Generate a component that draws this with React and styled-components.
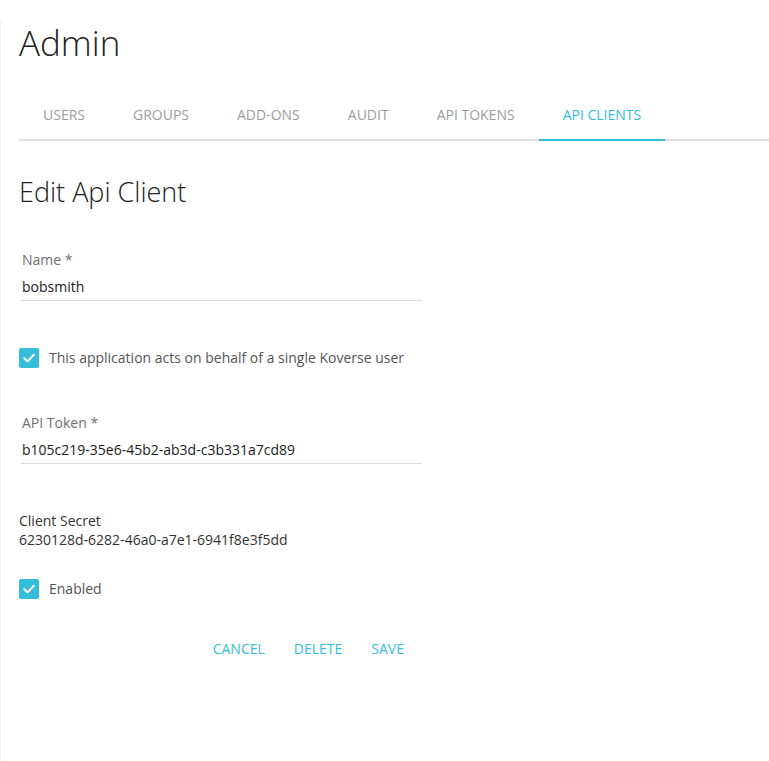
import * as React from 'react'
import styled, { createGlobalStyle } from 'styled-components'

const cyan = '#36bdda'

const GlobalStyle = createGlobalStyle`
  body {
    margin: 0;
    background: #fff;
    font-family: 'Open Sans', 'Liberation Sans', sans-serif;
    color: #212121;
  }
`

const Page = styled.div`
  min-height: 761px;
  box-sizing: border-box;
  border-left: 1px solid #f4f4f4;
  padding-left: 18px;
`

const Title = styled.h1`
  margin: 19px 0 0;
  font-size: 35px;
  font-weight: 300;
  line-height: 48px;
  color: #222;
`

const TabBar = styled.div`
  display: flex;
  margin-top: 24px;
  border-bottom: 2px solid #e0e0e0;
`

const Tab = styled.div`
  height: 47px;
  margin-bottom: -2px;
  padding: 0 24px 1px;
  display: flex;
  align-items: center;
  font-size: 14px;
  text-transform: uppercase;
  color: ${p => (p.$active ? cyan : '#9e9e9e')};
  border-bottom: 2px solid ${p => (p.$active ? cyan : 'transparent')};
`

const Heading = styled.h2`
  margin: 33px 0 0;
  font-size: 27px;
  font-weight: 300;
  line-height: 36px;
  color: #222;
`

const Field = styled.div`
  width: 400px;
  margin: ${p => p.$top}px 0 0 2px;
  padding: 0 0 3px 1px;
  border-bottom: 1px solid #dcdcdc;
  font-size: 14px;
  line-height: 20px;
`

const Label = styled.div`
  color: #707070;
`

const Value = styled.div`
  margin-top: 7px;
  color: #212121;
`

const CheckRow = styled.label`
  display: flex;
  align-items: center;
  gap: 10px;
  margin-top: ${p => p.$top}px;
  font-size: 14px;
  line-height: 20px;
  color: #555;
`

const Box = styled.span`
  width: 20px;
  height: 20px;
  border-radius: 2px;
  background: ${cyan};
  display: flex;
  align-items: center;
  justify-content: center;
`

const Secret = styled.div`
  margin-top: 47px;
  font-size: 14px;
  line-height: 19px;
  color: #333;
`

const Actions = styled.div`
  width: 399px;
  margin-top: 31px;
  display: flex;
  justify-content: flex-end;
  gap: 1px;
`

const Button = styled.button`
  height: 36px;
  padding: 0 14px;
  border: 0;
  background: none;
  font-family: inherit;
  font-size: 14px;
  text-transform: uppercase;
  color: ${cyan};
  cursor: pointer;
`

const Checkbox = ({ children, top }) => (
  <CheckRow $top={top}>
    <Box>
      <svg width='14' height='14' viewBox='0 0 14 14'>
        <path d='M2.3 7.3 L5.5 10.4 L11.8 3.8' fill='none' stroke='#fff' strokeWidth='2' strokeLinecap='round' strokeLinejoin='round' />
      </svg>
    </Box>
    {children}
  </CheckRow>
)

const tabs = ['Users', 'Groups', 'Add-ons', 'Audit', 'API Tokens', 'API Clients']

export default function App () {
  return (
    <Page>
      <GlobalStyle />
      <Title>Admin</Title>
      <TabBar>
        {tabs.map(t => (
          <Tab key={t} $active={t === 'API Clients'}>{t}</Tab>
        ))}
      </TabBar>
      <Heading>Edit Api Client</Heading>
      <Field $top={40}>
        <Label>Name *</Label>
        <Value>bobsmith</Value>
      </Field>
      <Checkbox top={47}>This application acts on behalf of a single Koverse user</Checkbox>
      <Field $top={45}>
        <Label>API Token *</Label>
        <Value>b105c219-35e6-45b2-ab3d-c3b331a7cd89</Value>
      </Field>
      <Secret>
        <div>Client Secret</div>
        <div>6230128d-6282-46a0-a7e1-6941f8e3f5dd</div>
      </Secret>
      <Checkbox top={30}>Enabled</Checkbox>
      <Actions>
        <Button>Cancel</Button>
        <Button>Delete</Button>
        <Button>Save</Button>
      </Actions>
    </Page>
  )
}
